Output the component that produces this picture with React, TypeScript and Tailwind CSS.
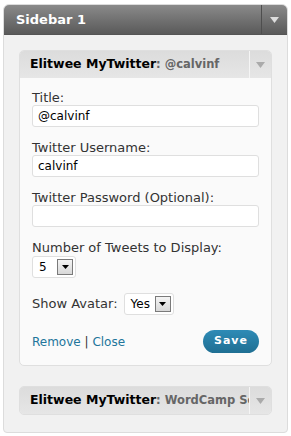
import React from "react";

function Arrow({ className }: { className: string }) {
  return (
    <svg width="9" height="6" viewBox="0 0 9 6" className={className}>
      <path d="M0 0h9L4.5 6z" fill="currentColor" />
    </svg>
  );
}

function SelectBox({ value, width }: { value: string; width: string }) {
  return (
    <div className={`flex items-center justify-between h-[22px] border border-[#dfdfdf] rounded-[3px] bg-white pl-[6px] pr-[2px] ${width}`}>
      <span className="text-[12px] text-black leading-none">{value}</span>
      <div className="w-[16px] h-[16px] border border-[#7a7a7a] bg-gradient-to-b from-[#f4f4f4] to-[#d8d8d8] flex items-center justify-center">
        <svg width="7" height="4" viewBox="0 0 7 4">
          <path d="M0 0h7L3.5 4z" fill="#000" />
        </svg>
      </div>
    </div>
  );
}

function Field({ label, value }: { label: string; value: string }) {
  return (
    <div className="flex flex-col">
      <label className="text-[13px] text-[#333] leading-[15px]">{label}</label>
      <div className="h-[22px] border border-[#dfdfdf] rounded-[3px] bg-white px-[5px] flex items-center text-[12px] text-black">
        {value}
      </div>
    </div>
  );
}

function WidgetHead({ sub }: { sub: string }) {
  return (
    <div className="flex h-[27px] items-stretch bg-gradient-to-b from-[#dcdcdc] to-[#e6e6e6]">
      <div className="flex-1 flex items-center pl-[10px] overflow-hidden whitespace-nowrap">
        <span className="font-bold text-[12.5px] text-black">Elitwee MyTwitter</span>
        <span className="font-bold text-[11.5px] text-[#666]">: {sub}</span>
      </div>
      <div className="w-[22px] border-l border-[#f5f5f5] flex items-center justify-center">
        <Arrow className="text-[#aaa]" />
      </div>
    </div>
  );
}

export default function App() {
  return (
    <div className="w-[291px] h-[436px] bg-white pt-[4px] px-[3px]" style={{ fontFamily: '"DejaVu Sans", Verdana, sans-serif' }}>
      <div className="rounded-t-[6px] rounded-b-[4px] border border-[#dcdcdc] bg-[#f1f1f1] h-[429px] flex flex-col overflow-hidden">
        <div className="flex h-[30px] bg-gradient-to-b from-[#8a8a8a] to-[#5a5a5a] border-b border-[#555]">
          <div className="flex-1 flex items-center pl-[12px]">
            <span className="font-bold text-[13px] text-white">Sidebar 1</span>
          </div>
          <div className="w-[26px] border-l border-[#4e4e4e] flex items-center justify-center">
            <Arrow className="text-[#ddd]" />
          </div>
        </div>

        <div className="px-[15px] pt-[15px] flex flex-col">
          <div className="rounded-[5px] border border-[#dfdfdf] overflow-hidden bg-[#fafafa]">
            <WidgetHead sub="@calvinf" />
            <div className="px-[12px] pt-[12px] pb-[12px] flex flex-col">
              <div className="flex flex-col gap-[13px]">
                <Field label="Title:" value="@calvinf" />
                <Field label="Twitter Username:" value="calvinf" />
                <Field label="Twitter Password (Optional):" value="" />
              </div>
              <div className="mt-[13px] flex flex-col">
                <span className="text-[13px] text-[#333] leading-[15px] mb-[1px]">Number of Tweets to Display:</span>
                <div className="flex">
                  <SelectBox value="5" width="w-[44px]" />
                </div>
              </div>
              <div className="mt-[15px] flex items-center gap-[6px]">
                <span className="text-[13px] text-[#333]">Show Avatar:</span>
                <SelectBox value="Yes" width="w-[50px]" />
              </div>
              <div className="mt-[15px] flex items-center justify-between">
                <div className="text-[12px] text-[#21759b]">
                  <span>Remove</span>
                  <span className="text-[#333]"> | </span>
                  <span>Close</span>
                </div>
                <button className="h-[23px] w-[56px] rounded-full bg-gradient-to-b from-[#2e8bb6] to-[#1f6f93] text-white font-bold text-[11px] tracking-[1px]">
                  Save
                </button>
              </div>
            </div>
          </div>

          <div className="mt-[20px] rounded-[5px] border border-[#dfdfdf] overflow-hidden">
            <WidgetHead sub="WordCamp Seattle" />
          </div>
        </div>
      </div>
    </div>
  );
}
